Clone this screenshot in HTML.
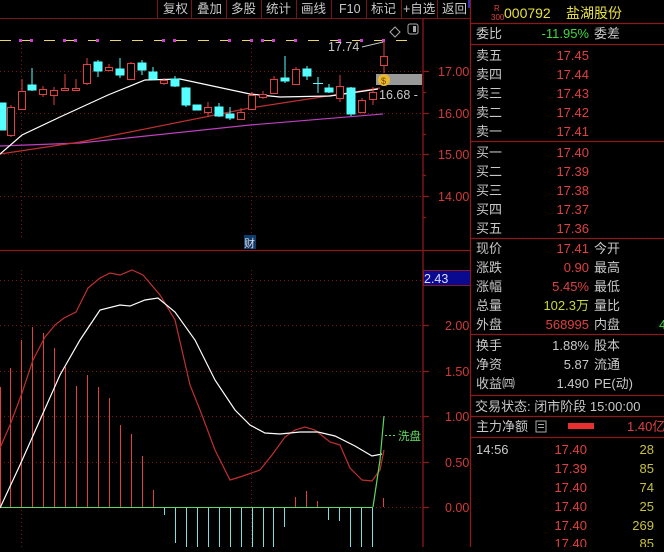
<!DOCTYPE html>
<html><head><meta charset="utf-8"><style>
body{margin:0;background:#000;width:664px;height:547px;overflow:hidden;font-family:"Liberation Sans","Noto Sans CJK SC",sans-serif;}
svg text{font-family:"Liberation Sans","Noto Sans CJK SC",sans-serif;}
</style></head><body>
<svg width="664" height="547" viewBox="0 0 664 547" xmlns="http://www.w3.org/2000/svg">
<rect width="664" height="547" fill="#000"/>
<!-- toolbar -->
<g stroke="#7a1515" stroke-width="1">
<line x1="0" y1="18.5" x2="470" y2="18.5"/>
<line x1="157.5" y1="0" x2="157.5" y2="18"/><line x1="191.5" y1="0" x2="191.5" y2="18"/><line x1="226.5" y1="0" x2="226.5" y2="18"/><line x1="261.5" y1="0" x2="261.5" y2="18"/><line x1="296.5" y1="0" x2="296.5" y2="18"/><line x1="331.5" y1="0" x2="331.5" y2="18"/><line x1="366.5" y1="0" x2="366.5" y2="18"/><line x1="401.5" y1="0" x2="401.5" y2="18"/><line x1="437.5" y1="0" x2="437.5" y2="18"/>
</g>
<g fill="#c8c8c8" font-size="12.5">
<text x="163" y="13">复权</text><text x="197" y="13">叠加</text><text x="231" y="13">多股</text><text x="266" y="13">统计</text><text x="301" y="13">画线</text><text x="339" y="13">F10</text><text x="371" y="13">标记</text><text x="403" y="13">+自选</text><text x="442" y="13">返回</text>
</g>
<!-- grid -->
<g stroke="#7a1515" stroke-dasharray="1,3" stroke-width="1">
<line x1="0" y1="71.5" x2="422" y2="71.5"/><line x1="0" y1="113.5" x2="422" y2="113.5"/><line x1="0" y1="154.5" x2="422" y2="154.5"/><line x1="0" y1="196.5" x2="422" y2="196.5"/>
<line x1="21.5" y1="40" x2="21.5" y2="240"/><line x1="251.5" y1="40" x2="251.5" y2="240"/>
<line x1="0" y1="280.5" x2="422" y2="280.5"/><line x1="0" y1="325.5" x2="422" y2="325.5"/><line x1="0" y1="371.5" x2="422" y2="371.5"/><line x1="0" y1="416.5" x2="422" y2="416.5"/><line x1="0" y1="462.5" x2="422" y2="462.5"/><line x1="0" y1="507.5" x2="422" y2="507.5"/>
<line x1="21.5" y1="270" x2="21.5" y2="547"/><line x1="251.5" y1="270" x2="251.5" y2="547"/>
</g>
<!-- axis -->
<g stroke="#8b1a1a" stroke-width="1.3">
<line x1="423" y1="18" x2="423" y2="547"/>
<line x1="0" y1="250.5" x2="470" y2="250.5"/>
<line x1="470.5" y1="0" x2="470.5" y2="547"/>
<line x1="423" y1="71.5" x2="429" y2="71.5"/><line x1="423" y1="113.5" x2="429" y2="113.5"/><line x1="423" y1="154.5" x2="429" y2="154.5"/><line x1="423" y1="196.5" x2="429" y2="196.5"/>
<line x1="423" y1="92.5" x2="426" y2="92.5"/><line x1="423" y1="134.5" x2="426" y2="134.5"/><line x1="423" y1="175.5" x2="426" y2="175.5"/><line x1="423" y1="217.5" x2="426" y2="217.5"/>
<line x1="423" y1="325.5" x2="429" y2="325.5"/><line x1="423" y1="371.5" x2="429" y2="371.5"/><line x1="423" y1="416.5" x2="429" y2="416.5"/><line x1="423" y1="462.5" x2="429" y2="462.5"/><line x1="423" y1="507.5" x2="429" y2="507.5"/>
</g>
<g fill="#d03a3a" font-size="12.5">
<text x="438" y="76">17.00</text><text x="438" y="118">16.00</text><text x="438" y="159">15.00</text><text x="438" y="201">14.00</text>
<text x="445" y="330">2.00</text><text x="445" y="376">1.50</text><text x="445" y="421">1.00</text><text x="445" y="467">0.50</text><text x="445" y="512">0.00</text>
</g>
<rect x="423.5" y="270.5" width="47" height="15" fill="#0a0a90" stroke="#8b1a1a"/>
<text x="424" y="283" fill="#dcdcff" font-size="12.5">2.43</text>
<!-- top icons -->
<path d="M395 27 L400 32 L395 37 L390 32 Z" fill="none" stroke="#aaa"/>
<rect x="408" y="24" width="10" height="10" rx="2" fill="none" stroke="#aaa"/><rect x="413" y="26" width="3" height="6" fill="#aaa"/>
<!-- dashed yellow line -->
<line x1="0" y1="40.5" x2="416" y2="40.5" stroke="#e8d66a" stroke-dasharray="11,11" stroke-width="1"/>
<g fill="#d040d0">
<rect x="19" y="39" width="3" height="3"/><rect x="30" y="39" width="3" height="3"/><rect x="63" y="39" width="3" height="3"/><rect x="74" y="39" width="3" height="3"/><rect x="96" y="39" width="3" height="3"/><rect x="162" y="39" width="3" height="3"/><rect x="173" y="39" width="3" height="3"/><rect x="228" y="39" width="3" height="3"/><rect x="250" y="39" width="3" height="3"/><rect x="261" y="39" width="3" height="3"/><rect x="272" y="39" width="3" height="3"/><rect x="294" y="39" width="3" height="3"/><rect x="338" y="39" width="3" height="3"/><rect x="360" y="39" width="3" height="3"/><rect x="382" y="39" width="3" height="3"/>
</g>
<!-- grey box -->
<rect x="376" y="74" width="46" height="11" fill="#999"/>
<!-- MA lines -->
<polyline fill="none" stroke="#c040c0" stroke-width="1.2" points="0,146 80,143 250,125 383,114"/>
<polyline fill="none" stroke="#c03030" stroke-width="1.2" points="0,154 80,142 250,108 380,88"/>
<polyline fill="none" stroke="#fff" stroke-width="1.2" points="0,154 22,135 60,117 108,95 145,80 180,79 250,94 280,97 330,96 378,89"/>
<!-- candles -->
<g stroke="#e04040" fill="#000" stroke-width="1">
<line x1="11" y1="105" x2="11" y2="137"/><rect x="7.5" y="107.5" width="7" height="28"/>
<line x1="22" y1="79" x2="22" y2="110"/><rect x="18.5" y="91.5" width="7" height="18"/>
<line x1="43" y1="86" x2="43" y2="97"/><rect x="39.5" y="89.5" width="7" height="5"/>
<line x1="54" y1="87" x2="54" y2="105"/><rect x="50.5" y="90.5" width="7" height="5"/>
<line x1="65" y1="74" x2="65" y2="90"/><rect x="61.5" y="88.5" width="7" height="2"/>
<line x1="76" y1="79" x2="76" y2="90"/><rect x="72.5" y="88.5" width="7" height="2"/>
<line x1="87" y1="58" x2="87" y2="85"/><rect x="83.5" y="64.5" width="7" height="19"/>
<line x1="109" y1="64" x2="109" y2="71"/><rect x="105.5" y="67.5" width="7" height="3"/>
<line x1="131" y1="62" x2="131" y2="80"/><rect x="127.5" y="63.5" width="7" height="16"/>
<line x1="164" y1="78" x2="164" y2="85"/><rect x="160.5" y="80.5" width="7" height="3"/>
<line x1="208" y1="102" x2="208" y2="117"/><rect x="204.5" y="107.5" width="7" height="5"/>
<line x1="241" y1="108" x2="241" y2="120"/><rect x="237.5" y="112.5" width="7" height="7"/>
<line x1="252" y1="92" x2="252" y2="110"/><rect x="248.5" y="95.5" width="7" height="14"/>
<line x1="263" y1="91" x2="263" y2="99"/><rect x="259.5" y="94.5" width="7" height="3"/>
<line x1="274" y1="76" x2="274" y2="94"/><rect x="270.5" y="79.5" width="7" height="14"/>
<line x1="296" y1="67" x2="296" y2="85"/><rect x="292.5" y="69.5" width="7" height="15"/>
<line x1="340" y1="75" x2="340" y2="102"/><rect x="336.5" y="86.5" width="7" height="12"/>
<line x1="362" y1="98" x2="362" y2="113"/><rect x="358.5" y="100.5" width="7" height="12"/>
<line x1="373" y1="87" x2="373" y2="105"/><rect x="369.5" y="92.5" width="7" height="7"/>
<line x1="384" y1="42" x2="384" y2="73"/><rect x="380.5" y="56.5" width="7" height="9"/>
</g>
<g stroke="#5ff" fill="#5ff" stroke-width="1">
<rect x="0" y="103" width="6" height="27"/>
<line x1="32" y1="68" x2="32" y2="91"/><rect x="28" y="85" width="8" height="5"/>
<line x1="98" y1="60" x2="98" y2="77"/><rect x="94" y="62" width="8" height="9"/>
<line x1="120" y1="58" x2="120" y2="78"/><rect x="116" y="69" width="8" height="6"/>
<line x1="142" y1="60" x2="142" y2="75"/><rect x="138" y="63" width="8" height="7"/>
<line x1="153" y1="67" x2="153" y2="80"/><rect x="149" y="72" width="8" height="7"/>
<line x1="175" y1="76" x2="175" y2="87"/><rect x="171" y="79" width="8" height="7"/>
<line x1="186" y1="87" x2="186" y2="107"/><rect x="182" y="88" width="8" height="17"/>
<rect x="193" y="105" width="8" height="5"/>
<line x1="219" y1="103" x2="219" y2="117"/><rect x="215" y="107" width="8" height="9"/>
<line x1="230" y1="107" x2="230" y2="120"/><rect x="226" y="114" width="8" height="4"/>
<line x1="285" y1="56" x2="285" y2="83"/><rect x="281" y="78" width="8" height="3"/>
<line x1="307" y1="66" x2="307" y2="80"/><rect x="303" y="69" width="8" height="7"/>
<line x1="318" y1="77" x2="318" y2="93"/><line x1="313" y1="83.5" x2="323" y2="83.5"/>
<line x1="329" y1="84" x2="329" y2="93"/><rect x="325" y="88" width="8" height="4"/>
<line x1="351" y1="87" x2="351" y2="116"/><rect x="347" y="88" width="8" height="26"/>
</g>
<circle cx="384" cy="80" r="6" fill="#e8b830"/><text x="381" y="84" font-size="9" fill="#7a4a00">$</text>
<text x="328" y="51" fill="#c8c8c8" font-size="12.5">17.74</text>
<line x1="362" y1="47" x2="383" y2="42" stroke="#c8c8c8"/>
<text x="379" y="99" fill="#c8c8c8" font-size="12.5">16.68 -</text>
<rect x="244" y="235" width="12" height="14" fill="#103a6a"/><text x="244" y="247" fill="#ddd" font-size="11">财</text>
<!-- MACD histogram -->
<g stroke="#e04040" stroke-width="1">
<line x1="0.5" y1="387" x2="0.5" y2="507"/><line x1="10.5" y1="368" x2="10.5" y2="507"/><line x1="21.5" y1="340" x2="21.5" y2="507"/><line x1="32.5" y1="327" x2="32.5" y2="507"/><line x1="43.5" y1="333" x2="43.5" y2="507"/><line x1="54.5" y1="348" x2="54.5" y2="507"/><line x1="65.5" y1="367" x2="65.5" y2="507"/><line x1="76.5" y1="386" x2="76.5" y2="507"/><line x1="87.5" y1="375" x2="87.5" y2="507"/><line x1="98.5" y1="387" x2="98.5" y2="507"/><line x1="109.5" y1="398" x2="109.5" y2="507"/><line x1="120.5" y1="425" x2="120.5" y2="507"/><line x1="131.5" y1="434" x2="131.5" y2="507"/><line x1="142.5" y1="456" x2="142.5" y2="507"/><line x1="153.5" y1="490" x2="153.5" y2="507"/>
<line x1="295.5" y1="497" x2="295.5" y2="507"/><line x1="306.5" y1="491" x2="306.5" y2="507"/><line x1="317.5" y1="501" x2="317.5" y2="507"/><line x1="383.5" y1="498" x2="383.5" y2="507"/>
</g>
<g stroke="#7fe0e0" stroke-width="1">
<line x1="164.5" y1="507" x2="164.5" y2="515"/><line x1="175.5" y1="507" x2="175.5" y2="543"/><line x1="186.5" y1="507" x2="186.5" y2="547"/><line x1="197.5" y1="507" x2="197.5" y2="547"/><line x1="208.5" y1="507" x2="208.5" y2="547"/><line x1="219.5" y1="507" x2="219.5" y2="547"/><line x1="230.5" y1="507" x2="230.5" y2="547"/><line x1="241.5" y1="507" x2="241.5" y2="547"/><line x1="252.5" y1="507" x2="252.5" y2="547"/><line x1="263.5" y1="507" x2="263.5" y2="547"/><line x1="273.5" y1="507" x2="273.5" y2="547"/><line x1="284.5" y1="507" x2="284.5" y2="527"/><line x1="328.5" y1="507" x2="328.5" y2="520"/><line x1="339.5" y1="507" x2="339.5" y2="521"/><line x1="350.5" y1="507" x2="350.5" y2="547"/><line x1="361.5" y1="507" x2="361.5" y2="547"/><line x1="372.5" y1="507" x2="372.5" y2="547"/>
</g>
<line x1="0" y1="507.5" x2="373" y2="507.5" stroke="#5fd85f" stroke-width="1"/>
<polyline fill="none" stroke="#c03030" stroke-width="1.2" points="0,448 10,425 22,393 33,360 45,337 55,325 64,318 76,312 88,288 100,278 110,273 120,275 132,270 143,275 160,295 175,320 190,385 200,410 215,450 230,480 240,477 260,470 272,455 285,437 295,430 305,427 315,430 330,442 340,445 350,468 362,480 372,481 380,470 384,450"/>
<polyline fill="none" stroke="#fff" stroke-width="1.2" points="0,508 20,465 40,420 60,375 80,340 100,310 120,305 130,306 145,300 158,298 175,312 195,340 215,380 235,410 250,425 265,433 280,434 300,432 318,432 335,436 355,446 372,456 382,454"/>
<polyline fill="none" stroke="#5fd85f" stroke-width="1.2" points="373,507 380,460 384,416"/>
<line x1="385" y1="435.5" x2="397" y2="435.5" stroke="#5fd85f" stroke-dasharray="2,2"/>
<text x="398" y="440" fill="#5fd85f" font-size="11.5">洗盘</text>

<!-- right panel -->
<g stroke="#8b1a1a" stroke-width="1.3">
<line x1="470" y1="23.5" x2="664" y2="23.5"/><line x1="470" y1="44.5" x2="664" y2="44.5"/><line x1="470" y1="141.5" x2="664" y2="141.5"/><line x1="470" y1="238.5" x2="664" y2="238.5"/><line x1="470" y1="334.5" x2="664" y2="334.5"/><line x1="470" y1="395.5" x2="664" y2="395.5"/><line x1="470" y1="416.5" x2="664" y2="416.5"/><line x1="470" y1="437.5" x2="664" y2="437.5"/>
</g>
<text x="494" y="11" fill="#e04040" font-size="8">R</text><text x="491" y="20" fill="#e04040" font-size="8">300</text>
<text x="504" y="18" fill="#e8e040" font-size="14">000792</text><text x="566" y="18" fill="#e8e040" font-size="14">盐湖股份</text>
<g font-size="13" fill="#c8c8c8">
<text x="476" y="38">委比</text><text x="594" y="38">委差</text>
<text x="476" y="60">卖五</text><text x="476" y="79">卖四</text><text x="476" y="98">卖三</text><text x="476" y="117">卖二</text><text x="476" y="136">卖一</text>
<text x="476" y="157">买一</text><text x="476" y="176">买二</text><text x="476" y="195">买三</text><text x="476" y="214">买四</text><text x="476" y="233">买五</text>
<text x="476" y="253">现价</text><text x="594" y="253">今开</text><text x="476" y="272">涨跌</text><text x="594" y="272">最高</text><text x="476" y="291">涨幅</text><text x="594" y="291">最低</text><text x="476" y="310">总量</text><text x="594" y="310">量比</text><text x="476" y="329">外盘</text><text x="594" y="329">内盘</text>
<text x="476" y="350">换手</text><text x="594" y="350">股本</text><text x="476" y="369">净资</text><text x="594" y="369">流通</text><text x="476" y="388">收益㈣</text><text x="594" y="388">PE(动)</text>
<text x="475" y="411">交易状态: 闭市阶段 15:00:00</text>
<text x="476" y="431">主力净额</text>
<text x="476" y="454">14:56</text>
</g>
<rect x="536" y="421" width="10" height="11" fill="none" stroke="#aaa"/><line x1="538" y1="424.5" x2="544" y2="424.5" stroke="#aaa"/><line x1="538" y1="427.5" x2="544" y2="427.5" stroke="#aaa"/>
<rect x="568" y="423" width="26" height="6" fill="#e83030"/>
<g font-size="13" text-anchor="end" fill="#e04040">
<text x="589" y="38" fill="#3fd83f">-11.95%</text>
<text x="589" y="60">17.45</text><text x="589" y="79">17.44</text><text x="589" y="98">17.43</text><text x="589" y="117">17.42</text><text x="589" y="136">17.41</text>
<text x="589" y="157">17.40</text><text x="589" y="176">17.39</text><text x="589" y="195">17.38</text><text x="589" y="214">17.37</text><text x="589" y="233">17.36</text>
<text x="589" y="253">17.41</text><text x="589" y="272">0.90</text><text x="589" y="291">5.45%</text><text x="589" y="310" fill="#c8d83a">102.3万</text><text x="589" y="329">568995</text>
<text x="589" y="350" fill="#c8c8c8">1.88%</text><text x="589" y="369" fill="#c8c8c8">5.87</text><text x="589" y="388" fill="#c8c8c8">1.490</text>
<text x="587" y="454">17.40</text><text x="587" y="473">17.39</text><text x="587" y="492">17.40</text><text x="587" y="511">17.40</text><text x="587" y="530">17.40</text><text x="587" y="548">17.40</text>
</g>
<text x="627" y="431" fill="#e04040" font-size="13">1.40亿</text>
<text x="659" y="329" fill="#3fd83f" font-size="13">4</text>
<g font-size="13" text-anchor="end" fill="#c8c040">
<text x="654" y="454">28</text><text x="654" y="473">85</text><text x="654" y="492">74</text><text x="654" y="511">25</text><text x="654" y="530">269</text><text x="654" y="548">85</text>
</g>
<rect x="468" y="0" width="2" height="8" fill="#3030c0"/>
</svg>
</body></html>
